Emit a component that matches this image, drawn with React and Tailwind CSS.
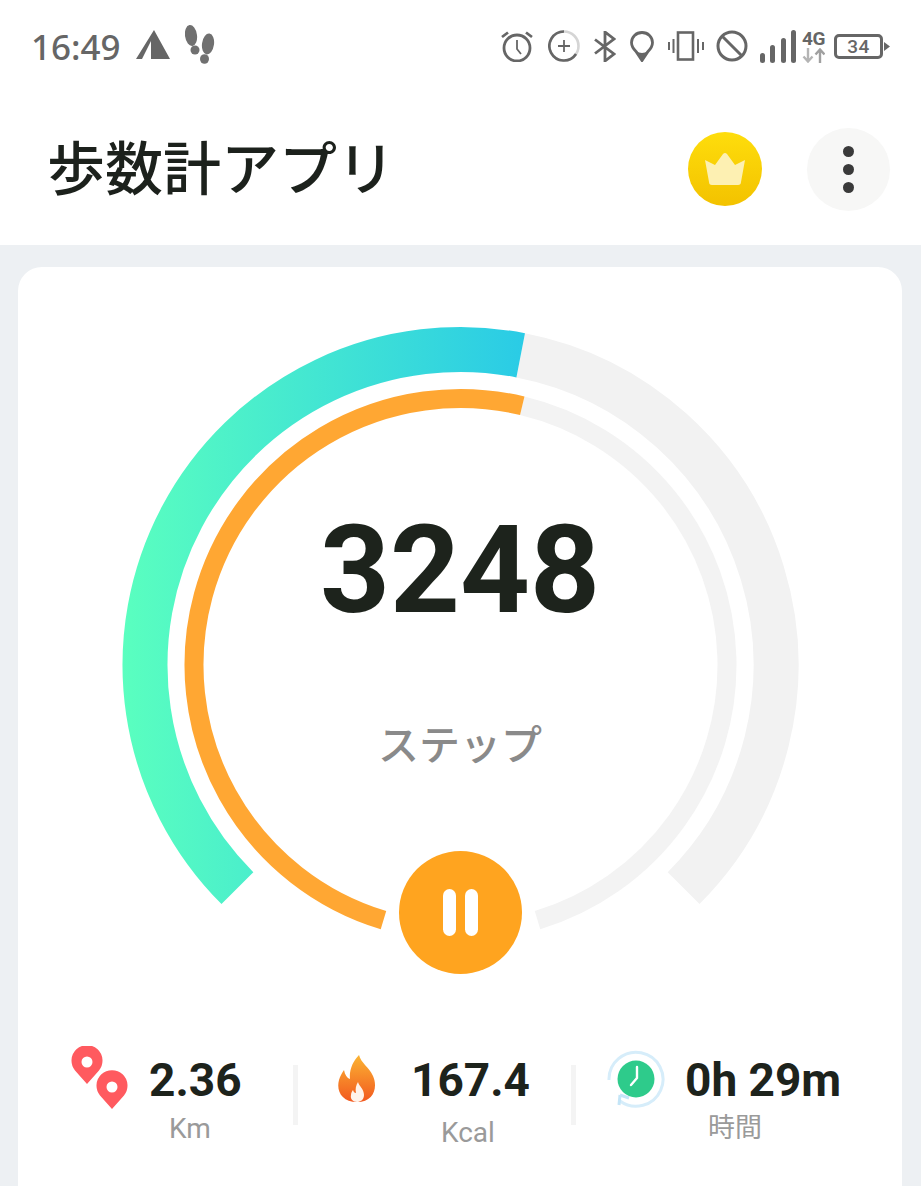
import React from 'react';

const cx = 340.5;
const cy = 340;

// angle is clockwise from 12 o'clock
const pt = (r, deg) => {
    const a = (deg * Math.PI) / 180;
    return [cx + r * Math.sin(a), cy - r * Math.cos(a)];
};

const arc = (r, from, to) => {
    const [x1, y1] = pt(r, from);
    const [x2, y2] = pt(r, to);
    const large = to - from > 180 ? 1 : 0;
    return `M${x1} ${y1}A${r} ${r} 0 ${large} 1 ${x2} ${y2}`;
};

const Ring = () => (
    <svg width="680" height="680" viewBox="0 0 680 680" fill="none" className="block">
        <defs>
            <linearGradient id="stepGrad" gradientUnits="userSpaceOnUse" x1="2" y1="0" x2="405" y2="0">
                <stop offset="0" stopColor="#5affbf" />
                <stop offset="1" stopColor="#2acbe6" />
            </linearGradient>
        </defs>
        <path d={arc(315.5, 371, 495)} stroke="#f2f2f2" strokeWidth="45" />
        <path d={arc(315.5, 225, 371)} stroke="url(#stepGrad)" strokeWidth="45" />
        <path d={arc(266.5, 373.4, 523.2)} stroke="#f3f3f3" strokeWidth="19" />
        <path d={arc(266.5, 196.8, 373.4)} stroke="#ffa733" strokeWidth="19" />
    </svg>
);

const StatusLeft = () => (
    <div className="flex items-center">
        <span className="-ml-[1px] font-['Noto_Sans',sans-serif] text-[35px] font-medium leading-none text-[#666666]">16:49</span>
        <svg width="34" height="29" viewBox="0 0 34 29" className="ml-[15px] -mt-[3px]">
            <path d="M18 0L34 29H15V11L6 29H0Z" fill="#666666" />
        </svg>
        <svg width="30" height="39" viewBox="0 0 30 39" fill="#707070" className="ml-[15px] -mt-[3px]">
            <ellipse cx="6" cy="10.500" rx="6" ry="10.500" transform="rotate(-8 6 10.500)" />
            <ellipse cx="10" cy="25" rx="4.500" ry="4.500" />
            <ellipse cx="23" cy="19" rx="6" ry="10.500" transform="rotate(8 23 19)" />
            <ellipse cx="19.500" cy="34" rx="4.500" ry="4.800" />
        </svg>
    </div>
);

const StatusRight = () => (
    <div className="flex items-center">
        <svg width="34" height="32" viewBox="0 0 34 32" fill="none" stroke="#666666" strokeWidth="2.8">
            <circle cx="17" cy="18" r="13" />
            <path d="M17 10V19L21 24" strokeWidth="1.8" />
            <path d="M2 7L8 2.500M32 7L26 2.500" />
        </svg>
        <svg width="32" height="32" viewBox="0 0 32 32" fill="none" stroke="#666666" strokeWidth="2.6" className="ml-[14px]">
            <circle cx="16" cy="16" r="14.500" stroke="#d5d5d5" />
            <path d="M16 1.500A14.500 14.500 0 1 0 28 24" />
            <path d="M16 10V22M10 16H22" strokeWidth="1.8" />
        </svg>
        <svg width="22" height="31" viewBox="0 0 22 31" fill="none" stroke="#666666" strokeWidth="2.8" className="ml-[14px]">
            <path d="M1 8.500L20 23L11 30V1L20 8L1 22.500" />
        </svg>
        <svg width="24" height="31" viewBox="0 0 24 31" fill="none" className="ml-[14px]">
            <path d="M12 1.500C6 1.500 1.500 6 1.500 11.500C1.500 15 3.500 18 6 20.500L12 29.500L18 20.500C20.500 18 22.500 15 22.500 11.500C22.500 6 18 1.500 12 1.500Z" stroke="#666666" strokeWidth="2.800" />
            <path d="M6 20L12 30L18 20C14 22.500 10 22.500 6 20Z" fill="#666666" />
        </svg>
        <svg width="36" height="30" viewBox="0 0 36 30" fill="none" stroke="#666666" strokeWidth="2.600" className="ml-[14px]">
            <rect x="10" y="1.500" width="15" height="27" />
            <path d="M1 11V19M5.500 8V22M30 8V22M35 11V19" strokeWidth="2" />
        </svg>
        <svg width="32" height="32" viewBox="0 0 32 32" fill="none" stroke="#666666" strokeWidth="3" className="ml-[12px]">
            <circle cx="16" cy="16" r="14" />
            <path d="M6 6L26 26" />
        </svg>
        <svg width="36" height="33" viewBox="0 0 36 33" fill="#666666" className="ml-[12px]">
            <rect x="0" y="23" width="5" height="10" rx="2.500" />
            <rect x="10" y="15" width="5" height="18" rx="2.500" />
            <rect x="21" y="8" width="5" height="25" rx="2.500" />
            <rect x="31" y="0" width="5" height="33" rx="2.500" />
        </svg>
        <div className="ml-[6px] flex w-[23px] flex-col items-center">
            <span className="font-['Roboto',sans-serif] text-[19px] font-bold leading-[18px] tracking-[-0.5px] text-[#666666]">4G</span>
            <svg width="23" height="15" viewBox="0 0 23 15" fill="none" strokeWidth="2.400">
                <path d="M6 0V13M1.500 8.500L6 13.500L10.500 8.500" stroke="#b4b4b4" />
                <path d="M18 15V2M13.500 6.500L18 1.500L22.500 6.500" stroke="#a0a0a0" />
            </svg>
        </div>
        <div className="ml-[9px] flex items-center">
            <div className="flex h-[25px] w-[49px] items-center justify-center rounded-[5px] border-[3px] border-[#666666]">
                <span className="font-['Roboto',sans-serif] text-[19px] font-medium leading-none tracking-[0.5px] text-[#666666]">34</span>
            </div>
            <svg width="6" height="9" viewBox="0 0 6 9" className="ml-[1px]">
                <path d="M0 0L6 4.500L0 9Z" fill="#666666" />
            </svg>
        </div>
    </div>
);

const CrownButton = () => (
    <div className="flex h-[74px] w-[74px] items-center justify-center rounded-full bg-gradient-to-b from-[#fedd0c] to-[#f3c200]">
        <svg width="40" height="32" viewBox="0 0 40 32" fill="#fdf0b2">
            <path d="M0 7L10 12L18 1Q20 -1 22 1L30 12L40 7L36 29Q36 32 33 32H7Q4 32 4 29Z" />
        </svg>
    </div>
);

const MenuButton = () => (
    <div className="ml-[45px] flex h-[83px] w-[83px] flex-col items-center justify-center gap-[7px] rounded-full bg-[#f7f7f6]">
        <div className="h-[11px] w-[11px] rounded-full bg-[#3a3a3a]" />
        <div className="h-[11px] w-[11px] rounded-full bg-[#3a3a3a]" />
        <div className="h-[11px] w-[11px] rounded-full bg-[#3a3a3a]" />
    </div>
);

const PinsIcon = () => (
    <svg width="60" height="64" viewBox="0 0 60 64" fill="#ff5a5f" fillRule="evenodd">
        <path d="M17 38L5 24.500A15.500 15.500 0 1 1 29 24.500ZM17 10.500A5.500 5.500 0 1 0 17 21.500A5.500 5.500 0 1 0 17 10.500Z" />
        <path d="M42 63L30 49.500A15.500 15.500 0 1 1 54 49.500ZM42 35.500A5.500 5.500 0 1 0 42 46.500A5.500 5.500 0 1 0 42 35.500Z" />
    </svg>
);

const FlameIcon = () => (
    <svg width="38" height="48" viewBox="0 0 38 48">
        <defs>
            <linearGradient id="flameGrad" x1="0" y1="0" x2="0" y2="1">
                <stop offset="0" stopColor="#fbb433" />
                <stop offset="1" stopColor="#f2591f" />
            </linearGradient>
        </defs>
        <path d="M21 0C23 8 31 12 35 21C40 32 36 47 19 47C4 47 -2 36 1 25C2 21 4 18 6 15C7 20 9 23 12 24C11 15 15 6 21 0Z" fill="url(#flameGrad)" />
        <path d="M20 27C21 31 26 34 26 40C26 45 22 47 19 47C15 47 12 44 13 40C13 38 14 36 15 35C15.500 37 16.500 38 18 38C17 34 18 30 20 27Z" fill="#fff3ea" />
    </svg>
);

const ClockIcon = () => (
    <svg width="60" height="60" viewBox="0 0 60 60" fill="none">
        <path d="M3 31A27 27 0 1 1 14 52" stroke="#d6edfa" strokeWidth="3" />
        <path d="M14 46L13 56M14 46L23 49" stroke="#c4e5f7" strokeWidth="3" />
        <circle cx="30" cy="30" r="18.500" fill="#2ecb8b" />
        <path d="M31 18V29L25 36" stroke="#ffffff" strokeWidth="2.400" strokeLinecap="round" strokeLinejoin="round" />
    </svg>
);

const Divider = () => <div className="mt-[65px] h-[60px] w-[5px] shrink-0 bg-[#f4f4f4]" />;

const Stat = ({ icon, value, label, labelClass }) => (
    <div className="flex items-start">
        {icon}
        <div className="pt-[7px]">
            <p className="font-['Roboto',sans-serif] text-[46px] font-bold leading-[54px] text-[#1d231c]">{value}</p>
            <p className={labelClass}>{label}</p>
        </div>
    </div>
);

const App = () => {
    return (
        <div className="flex h-[1186px] w-full flex-col overflow-hidden bg-[#edf0f3]">
            <header className="h-[245px] shrink-0 bg-white">
                <div className="flex h-[92px] items-center justify-between pl-[32px] pr-[31px]">
                    <StatusLeft />
                    <StatusRight />
                </div>
                <div className="flex h-[154px] items-center justify-between pl-[47px] pr-[31px]">
                    <h1 className="mb-[8px] font-['Noto_Sans_CJK_JP',sans-serif] text-[58px] font-medium leading-none text-[#1c211c]">歩数計アプリ</h1>
                    <div className="flex items-center">
                        <CrownButton />
                        <MenuButton />
                    </div>
                </div>
            </header>

            <main className="ml-[18px] mr-[19px] mt-[22px] flex-1 rounded-t-[24px] bg-white">
                <div className="relative ml-[102px] mt-[58px] h-[680px] w-[680px]">
                    <Ring />
                    <div className="absolute inset-0 flex flex-col items-center">
                        <p className="mt-[185px] font-['Roboto',sans-serif] text-[122px] font-bold leading-none text-[#1d231c]">3248</p>
                        <p className="mt-[90px] font-['Noto_Sans_CJK_JP',sans-serif] text-[41px] font-medium leading-none text-[#8a8a8a]">ステップ</p>
                    </div>
                    <button className="absolute left-[279px] top-[526px] flex h-[123px] w-[123px] items-center justify-center gap-[9px] rounded-full bg-[#ffa41f]">
                        <span className="h-[47px] w-[13px] rounded-full bg-white" />
                        <span className="h-[47px] w-[13px] rounded-full bg-white" />
                    </button>
                </div>

                <div className="-mt-[5px] flex items-start">
                    <div className="w-[275px] shrink-0 pl-[52px] pt-[46px]">
                        <Stat
                            icon={<div className="mr-[19px]"><PinsIcon /></div>}
                            value="2.36"
                            label="Km"
                            labelClass="ml-[20px] mt-[6px] font-['Roboto',sans-serif] text-[28px] leading-[32px] text-[#9a9a9a]"
                        />
                    </div>
                    <Divider />
                    <div className="w-[273px] shrink-0 pl-[40px] pt-[46px]">
                        <Stat
                            icon={<div className="mr-[35px] mt-[9px]"><FlameIcon /></div>}
                            value="167.4"
                            label="Kcal"
                            labelClass="ml-[30px] mt-[10px] font-['Roboto',sans-serif] text-[28px] leading-[32px] text-[#9a9a9a]"
                        />
                    </div>
                    <Divider />
                    <div className="pl-[30px] pt-[46px]">
                        <Stat
                            icon={<div className="mr-[19px] mt-[3px]"><ClockIcon /></div>}
                            value="0h 29m"
                            label="時間"
                            labelClass="ml-[23px] mt-[3px] font-['Noto_Sans_CJK_JP',sans-serif] text-[27px] leading-[32px] text-[#9a9a9a]"
                        />
                    </div>
                </div>
            </main>
        </div>
    );
};

export default App;
